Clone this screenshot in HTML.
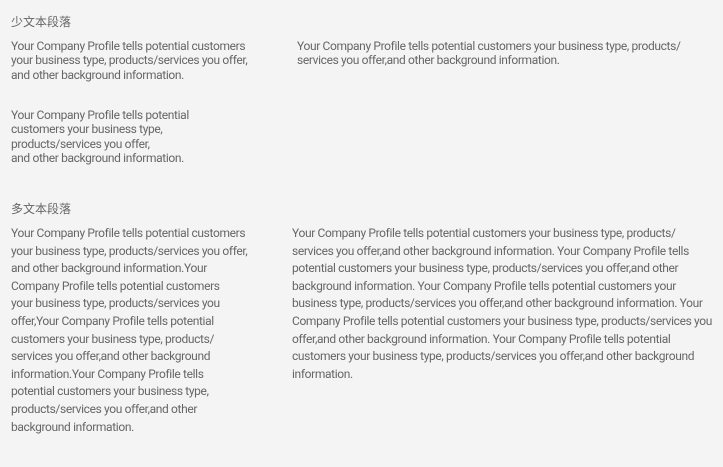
<!DOCTYPE html>
<html><head><meta charset="utf-8"><style>
html,body{margin:0;padding:0;width:723px;height:467px;background:#f4f4f4;overflow:hidden}
body{font-family:"Roboto","Liberation Sans","Noto Sans CJK SC",sans-serif;color:#666;font-size:12px;letter-spacing:-0.36px}
.b{position:absolute;white-space:nowrap}
.h{font-size:12px;color:#666;letter-spacing:0}
.s div{height:14.3px;line-height:14.3px}
.m div{height:17.6px;line-height:17.6px}
</style></head><body>
<div class="b h" style="left:11px;top:14px;line-height:16px">少文本段落</div>
<div class="b s" style="left:11px;top:39px">
<div>Your Company Profile tells potential customers</div>
<div>your business type, products/services you offer,</div>
<div>and other background information.</div>
</div>
<div class="b s" style="left:297px;top:39px">
<div>Your Company Profile tells potential customers your business type, products/</div>
<div>services you offer,and other background information.</div>
</div>
<div class="b s" style="left:11px;top:108px">
<div>Your Company Profile tells potential</div>
<div>customers your business type,</div>
<div>products/services you offer,</div>
<div>and other background information.</div>
</div>
<div class="b h" style="left:11px;top:201px;line-height:16px">多文本段落</div>
<div class="b m" style="left:11px;top:225px">
<div>Your Company Profile tells potential customers</div>
<div>your business type, products/services you offer,</div>
<div>and other background information.Your</div>
<div>Company Profile tells potential customers</div>
<div>your business type, products/services you</div>
<div>offer,Your Company Profile tells potential</div>
<div>customers your business type, products/</div>
<div>services you offer,and other background</div>
<div>information.Your Company Profile tells</div>
<div>potential customers your business type,</div>
<div>products/services you offer,and other</div>
<div>background information.</div>
</div>
<div class="b m" style="left:292px;top:225px">
<div>Your Company Profile tells potential customers your business type, products/</div>
<div>services you offer,and other background information. Your Company Profile tells</div>
<div>potential customers your business type, products/services you offer,and other</div>
<div>background information. Your Company Profile tells potential customers your</div>
<div>business type, products/services you offer,and other background information. Your</div>
<div>Company Profile tells potential customers your business type, products/services you</div>
<div>offer,and other background information. Your Company Profile tells potential</div>
<div>customers your business type, products/services you offer,and other background</div>
<div>information.</div>
</div>
</body></html>
